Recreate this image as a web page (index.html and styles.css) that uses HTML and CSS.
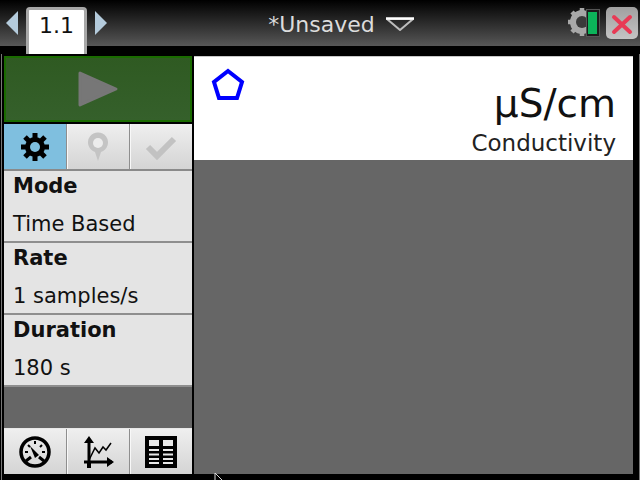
FILE: index.html
```html
<!DOCTYPE html>
<html>
<head>
    <meta charset="UTF-8">
    <title>Vernier DataQuest</title>
    <link rel="stylesheet" href="styles.css">
</head>
<body>
<div class="top_bar">
    <div class="page_nav">
        <svg width="13" height="24" viewBox="0 0 13 24"><polygon points="12,0 12,24 0,12" fill="#b4cbdc"/></svg>
        <div class="page_tab">1.1</div>
        <svg width="13" height="24" viewBox="0 0 13 24"><polygon points="1,0 1,24 13,12" fill="#b4cbdc"/></svg>
    </div>
    <div class="doc_title">
        <span>*Unsaved</span>
        <svg width="28" height="14" viewBox="0 0 28 14"><path d="M1 2H27L14 13Z" fill="none" stroke="#bdbdbd" stroke-width="2"/><path d="M0 1.500H28" stroke="#fff" stroke-width="2.500"/></svg>
    </div>
    <div class="status_icons">
        <svg width="34" height="32" viewBox="0 0 34 32">
            <path d="M14 1V29M0 15H28M4 5L24 25M24 5L4 25" stroke="#a8a8a8" stroke-width="4.500"/>
            <circle cx="14" cy="15" r="9" fill="none" stroke="#a8a8a8" stroke-width="6"/>
            <circle cx="14" cy="15" r="6" fill="#3a3a3a"/>
            <rect x="18.500" y="2.500" width="13" height="27" fill="#1c1c1c" stroke="#555" stroke-width="1"/>
            <rect x="20" y="5" width="9" height="22" fill="#0cb45a"/>
        </svg>
        <div class="close_btn">
            <svg width="24" height="24" viewBox="0 0 24 24"><path d="M4 6L20 21M20 6L4 21" stroke="#e83a55" stroke-width="4" stroke-linecap="round"/></svg>
        </div>
    </div>
</div>

<div class="content">
    <div class="side">
        <div class="play_btn">
            <svg width="40" height="36" viewBox="0 0 40 36"><path d="M2 2L38 18L2 34Z" fill="#777" stroke="#777" stroke-width="3" stroke-linejoin="round"/></svg>
        </div>
        <div class="tabs">
            <div class="tab tab_on">
                <svg width="30" height="30" viewBox="0 0 30 30">
                    <path d="M15 1V29M1 15H29M5 5L25 25M25 5L5 25" stroke="#000" stroke-width="5"/>
                    <circle cx="15" cy="15" r="10" fill="#000"/>
                    <circle cx="15" cy="15" r="5" fill="#7fbfdf"/>
                </svg>
            </div>
            <div class="tab">
                <svg width="24" height="30" viewBox="0 0 24 30"><path d="M12 29L9 20A10 10 0 1 1 15 20Z" fill="#c4c4c4"/><circle cx="12" cy="11" r="5" fill="#ececec"/></svg>
            </div>
            <div class="tab">
                <svg width="32" height="26" viewBox="0 0 32 26"><path d="M3 13L12 22L29 5" fill="none" stroke="#c2c2c2" stroke-width="6"/></svg>
            </div>
        </div>
        <div class="setting">
            <p class="label">Mode</p>
            <p class="value">Time Based</p>
        </div>
        <div class="setting">
            <p class="label">Rate</p>
            <p class="value">1 samples/s</p>
        </div>
        <div class="setting">
            <p class="label">Duration</p>
            <p class="value">180 s</p>
        </div>
        <div class="side_gap"></div>
        <div class="tabs tabs_bottom">
            <div class="tab">
                <svg width="32" height="32" viewBox="0 0 32 32">
                    <circle cx="16" cy="16" r="14" fill="none" stroke="#000" stroke-width="3.500"/>
                    <path d="M16 5V8M6 16H9M26 16H23M9 9L11 11M23 9L21 11" stroke="#000" stroke-width="2"/>
                    <path d="M11 10L20 19L16 22Z" fill="#000"/>
                    <path d="M7 25L12 21M25 25L20 21" stroke="#000" stroke-width="3"/>
                </svg>
            </div>
            <div class="tab">
                <svg width="32" height="32" viewBox="0 0 32 32">
                    <path d="M7 3V29M2 26H30" fill="none" stroke="#000" stroke-width="3"/>
                    <path d="M7 0L2 7H12ZM32 26L25 21V31Z" fill="#000"/>
                    <path d="M7 24L13 12L17 17L21 11L24 14L29 7" fill="none" stroke="#000" stroke-width="1.500"/>
                    <path d="M7 32V26" stroke="#000" stroke-width="4"/>
                </svg>
            </div>
            <div class="tab">
                <svg width="32" height="32" viewBox="0 0 32 32">
                    <rect width="32" height="32" fill="#000"/>
                    <path d="M4 4H14V10H4ZM18 4H28V10H18Z" fill="#e8e8e8"/>
                    <path d="M4 13H14V15H4ZM18 13H28V15H18ZM4 17.500H14V19.500H4ZM18 17.500H28V19.500H18ZM4 22H14V24H4ZM18 22H28V24H18ZM4 26H14V28H4ZM18 26H28V28H18Z" fill="#e8e8e8"/>
                </svg>
            </div>
        </div>
    </div>

    <div class="meter">
        <div class="meter_head">
            <svg width="34" height="32" viewBox="0 0 34 32"><polygon points="17,3 31,14 26,30 8,30 3,14" fill="none" stroke="#0000ff" stroke-width="4"/></svg>
            <div class="reading">
                <p class="unit">µS/cm</p>
                <p class="quantity">Conductivity</p>
            </div>
        </div>
        <div class="meter_body"></div>
    </div>
</div>

<svg class="cursor" width="12" height="9" viewBox="0 0 12 9"><path d="M1 0V9M1 0L10 9" fill="none" stroke="#ddd" stroke-width="1"/></svg>
</body>
</html>
```

FILE: styles.css
```css
* {
    margin: 0px;
    padding: 0px;
    box-sizing: border-box;
}

html, body {
    width: 640px;
    height: 480px;
    overflow: hidden;
}

body {
    position: relative;
    background-color: black;
    font-family: "DejaVu Sans", sans-serif;
}

.top_bar {
    height: 46px;
    background: linear-gradient(#000000, #575757);
    display: flex;
    align-items: center;
    justify-content: space-between;
}

.page_nav {
    display: flex;
    align-items: center;
    width: 112px;
    padding-left: 6px;
    gap: 7px;
}

.page_tab {
    width: 61px;
    height: 47px;
    margin-top: 15px;
    background-color: white;
    border: 3px solid #a8a8a8;
    border-bottom: none;
    border-radius: 4px 4px 0 0;
    font-size: 22px;
    line-height: 31px;
    text-align: center;
    color: #111;
    position: relative;
    z-index: 1;
}

.doc_title {
    display: flex;
    align-items: center;
    gap: 11px;
    color: #dcdcdc;
    font-size: 22px;
    margin-left: 2px;
    margin-top: 2px;
}

.status_icons {
    display: flex;
    align-items: center;
    gap: 4px;
    padding-right: 2px;
}

.close_btn {
    width: 32px;
    height: 32px;
    margin-top: -1px;
    border-radius: 5px;
    background: linear-gradient(#a0a0a0, #c4c4c4);
    display: flex;
    align-items: center;
    justify-content: center;
}

.content {
    height: 418px;
    margin-top: 10px;
    padding-left: 4px;
    padding-right: 7px;
    display: flex;
    gap: 2px;
}

/* thin lines left and right of the screen */
.content::before, .content::after {
    content: "";
    position: absolute;
    top: 54px;
    bottom: 0;
    width: 1px;
    background-color: #777;
}

.content::before {
    left: 1px;
}

.content::after {
    right: 0;
}

.side {
    width: 188px;
    display: flex;
    flex-direction: column;
}

.play_btn {
    height: 66px;
    border: 2px solid #1a6b00;
    background: linear-gradient(#2f5a22, #35602b);
    display: flex;
    align-items: center;
    justify-content: center;
    margin-bottom: 2px;
}

.tabs {
    height: 47px;
    display: flex;
    border-bottom: 2px solid #8a8a8a;
}

.tabs_bottom {
    height: 46px;
    border-bottom: none;
    border-top: 1px solid #e8e8e8;
}

.tab {
    flex: 1;
    background: linear-gradient(#efefef, #d4d4d4);
    border-left: 1px solid #8e8e8e;
    box-shadow: inset 1px 0 0 #f8f8f8;
    display: flex;
    align-items: center;
    justify-content: center;
}

.tab:first-child {
    border-left: none;
    box-shadow: none;
}

.tab_on {
    background: #7fbfdf;
}

.setting {
    height: 72px;
    background-color: #e4e4e4;
    border-bottom: 2px solid #8e8e8e;
    padding-left: 9px;
    color: #111;
    overflow: hidden;
}

.label {
    font-size: 21px;
    font-weight: bold;
    line-height: 30px;
}

.value {
    font-size: 21px;
    line-height: 30px;
    margin-top: 8px;
}

.side_gap {
    flex: 1;
    background-color: #666666;
}

.meter {
    flex: 1;
    display: flex;
    flex-direction: column;
}

.meter_head {
    height: 104px;
    background-color: white;
    border-top: 1px solid #c8c8c8;
    display: flex;
    justify-content: space-between;
    padding: 11px 17px 0 17px;
}

.reading {
    text-align: right;
    color: #111;
}

.unit {
    font-size: 39px;
    line-height: 46px;
    margin-top: 13px;
}

.quantity {
    font-size: 23px;
    line-height: 32px;
    color: #222;
}

.meter_body {
    flex: 1;
    background-color: #666666;
}

.cursor {
    position: absolute;
    left: 214px;
    top: 473px;
}
```
